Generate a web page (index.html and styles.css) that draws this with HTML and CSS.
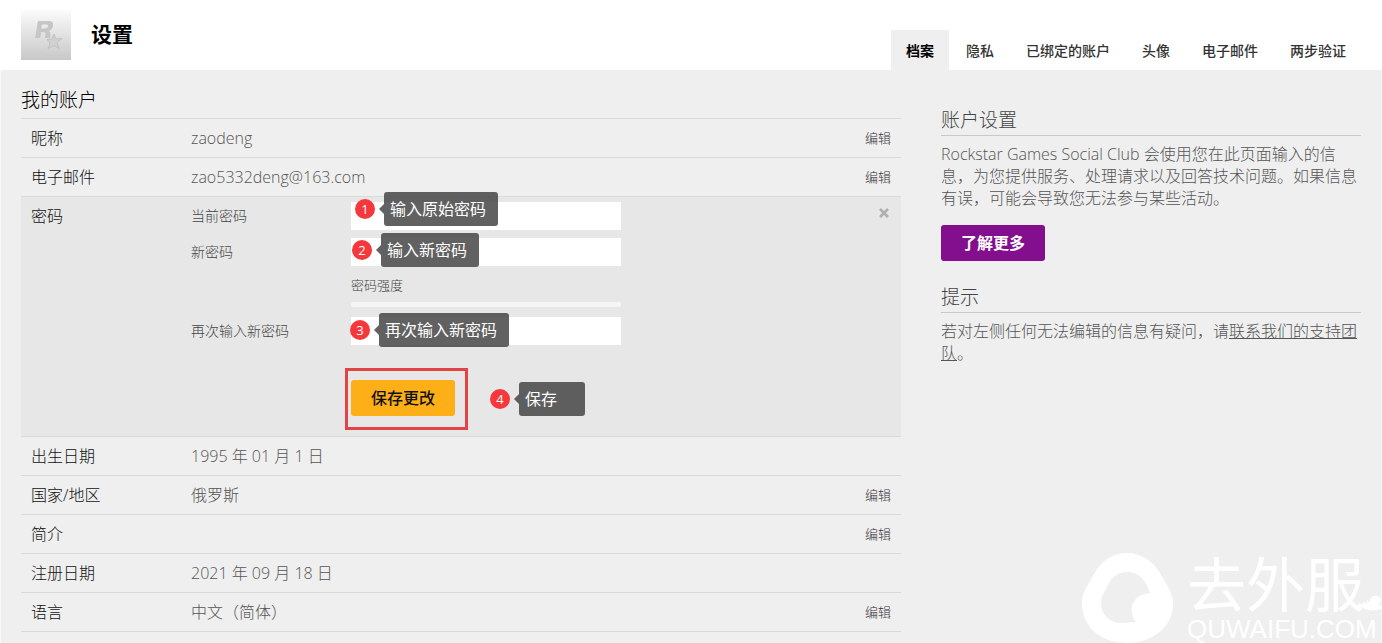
FILE: index.html
```html
<!DOCTYPE html>
<html lang="zh-CN">
<head>
<meta charset="utf-8">
<meta name="viewport" content="width=device-width, initial-scale=1">
<title>设置</title>
<link rel="stylesheet" href="styles.css">
</head>
<body>
<header class="header">
  <svg class="avatar" viewBox="0 0 50 50" aria-hidden="true">
    <defs><linearGradient id="fade" x1="0" y1="0" x2="0" y2="1"><stop offset="0" stop-color="#fbfbfb"/><stop offset="1" stop-color="#c8c8c8"/></linearGradient></defs>
    <rect width="50" height="50" fill="url(#fade)"/>
    <path d="M17 11h11q5 0 4 5-1 4-4 5 2 1 1.500 4l-.5 3h-5l.5-4q0-2-2-2h-2l-1.500 6h-5zM21 14.500l-1 4h4q2.500 0 3-2 .5-2-2-2z" fill="#c6c6c6" fill-rule="evenodd"/>
    <path d="M33 24l1.500 5 6.500-.5-5 4 2 6-5-3-6 3 2-5.500-3-3.500 5-.5z" fill="#d2d2d2" stroke="#c2c2c2"/>
  </svg>
  <h1 class="title">设置</h1>
  <nav class="tabs">
    <a class="tab active" href="#">档案</a>
    <a class="tab" href="#">隐私</a>
    <a class="tab" href="#">已绑定的账户</a>
    <a class="tab" href="#">头像</a>
    <a class="tab" href="#">电子邮件</a>
    <a class="tab" href="#">两步验证</a>
  </nav>
</header>
<div class="content">
  <main class="account">
    <h2 class="heading">我的账户</h2>
    <section class="row"><h3 class="name">昵称</h3><p class="value">zaodeng</p><button class="edit" type="button">编辑</button></section>
    <section class="row"><h3 class="name">电子邮件</h3><p class="value">zao5332deng@163.com</p><button class="edit" type="button">编辑</button></section>
    <section class="row open">
      <h3 class="name">密码</h3>
      <form class="form">
        <label class="label" for="current">当前密码</label>
        <div class="field"><input class="input" id="current" type="password">
          <div class="note note-1"><span class="badge">1</span><span class="tip">输入原始密码</span></div></div>
        <label class="label" for="new">新密码</label>
        <div class="field"><input class="input" id="new" type="password">
          <div class="note note-2"><span class="badge">2</span><span class="tip">输入新密码</span></div></div>
        <div class="strength"><span>密码强度</span><div class="meter"></div></div>
        <label class="label" for="again">再次输入新密码</label>
        <div class="field"><input class="input" id="again" type="password">
          <div class="note note-3"><span class="badge">3</span><span class="tip">再次输入新密码</span></div></div>
        <div class="actions"><button class="button save" type="button">保存更改</button>
          <div class="frame"></div>
          <div class="note note-4"><span class="badge">4</span><span class="tip">保存</span></div></div>
      </form>
      <button class="close" type="button" aria-label="关闭"><svg width="10" height="10" viewBox="0 0 10 10"><path d="M1 1l8 8M9 1L1 9" stroke="#b0b0b0" stroke-width="2.600"/></svg></button>
    </section>
    <section class="row"><h3 class="name">出生日期</h3><p class="value">1995 年 01 月 1 日</p></section>
    <section class="row"><h3 class="name">国家/地区</h3><p class="value">俄罗斯</p><button class="edit" type="button">编辑</button></section>
    <section class="row"><h3 class="name">简介</h3><p class="value"></p><button class="edit" type="button">编辑</button></section>
    <section class="row"><h3 class="name">注册日期</h3><p class="value">2021 年 09 月 18 日</p></section>
    <section class="row"><h3 class="name">语言</h3><p class="value">中文（简体）</p><button class="edit" type="button">编辑</button></section>
  </main>
  <aside class="side">
    <h2 class="side-heading">账户设置</h2>
    <p class="text">Rockstar Games Social Club 会使用您在此页面输入的信息，为您提供服务、处理请求以及回答技术问题。如果信息有误，可能会导致您无法参与某些活动。</p>
    <button class="button more" type="button">了解更多</button>
    <h2 class="side-heading">提示</h2>
    <p class="text">若对左侧任何无法编辑的信息有疑问，请<a class="link" href="#">联系我们的支持团队</a>。</p>
  </aside>
</div>
<div class="watermark">
  <svg class="mark" viewBox="0 0 92 90" aria-hidden="true"><path fill="#fff" fill-rule="evenodd" d="M46 0C60 0 72 8 79 20C87 34 92 41 92 51C92 74 71 90 47 90C21 90 1 75 1 50C1 40 7 32 13 21C20 8 31 0 46 0ZM46 19C37 19 31 24 27 32C23 40 20 43 20 50C20 62 29 70 41 70L55 69C47 59 49 42 69 40C64 25 57 19 46 19Z"/></svg>
  <div class="words"><span class="brand">去外服</span><span class="domain">QUWAIFU.COM</span></div>
  <svg class="snail" viewBox="0 0 28 18" aria-hidden="true"><path fill="#fff" d="M6 8l3 2 0-4 3 3 1-4 3 3c-1-5 3-8 7-7 5 1 5 6 1 9l4 1-1 3c-6 2-14 2-18-1l-9-1z"/></svg>
</div>
</body>
</html>
```
FILE: styles.css
```css
* { box-sizing: border-box; }
body {
  display: flex;
  flex-direction: column;
  margin: 0;
  min-height: 100vh;
  background: #efefef;
  color: #555;
  font: 300 16px/22px "Open Sans", "Noto Sans CJK SC", sans-serif;
}
h1, h2, h3, p { margin: 0; font-weight: inherit; }
button { padding: 0; border: 0; background: none; font-family: inherit; cursor: pointer; }
.header { display: flex; height: 70px; padding: 0 21px; background: #fff; }
.avatar { width: 50px; height: 50px; margin: 10px 20px 0 0; }
.title { color: #000; font-size: 21px; line-height: 68px; font-weight: 700; }
.tabs { display: flex; gap: 2px; margin-left: auto; padding-top: 30px; }
.tab { padding: 0 15px; color: #333; font-size: 14px; line-height: 42px; font-weight: 500; text-decoration: none; }
.tab.active { background: #efefef; color: #000; font-weight: 700; }
.content { flex: 1; display: flex; gap: 40px; padding: 0 20px; border: solid #f8f8f8; border-width: 0 1px; }
.account { flex: 1; min-width: 0; padding-top: 18px; }
.heading { height: 31px; border-bottom: 1px solid #dadada; color: #000; font-size: 19px; line-height: 24px; }
.row { display: flex; min-height: 39px; padding: 0 10px; border-bottom: 1px solid #dadada; line-height: 38px; }
.name { width: 160px; color: #111; font-size: 16px; }
.value { flex: 1; }
.edit { color: #333; font-size: 13px; line-height: 38px; font-weight: 300; }
.row.open { background: #e7e7e7; }
.form { flex: 1; display: grid; grid-template-columns: 160px 270px; align-content: start; row-gap: 8px; padding: 5px 0 20px; line-height: 28px; }
.label { color: #444; font-size: 14px; }
.field { position: relative; height: 28px; }
.input { display: block; width: 100%; height: 28px; padding: 0 8px; border: 0; background: #fff; }
.strength { grid-column: 2; height: 35px; color: #444; font-size: 13px; line-height: 22px; }
.strength span { display: block; }
.meter { height: 5px; margin-top: 6px; border-radius: 3px; background: #f5f5f5; }
.actions { grid-column: 2; position: relative; margin-top: 27px; height: 36px; }
.button { width: 104px; height: 36px; border-radius: 3px; font-size: 16px; line-height: 36px; }
.save { background: #fcaf17; color: #111; font-weight: 500; }
.frame { position: absolute; left: -6px; top: -12px; width: 123px; height: 62px; border: 3px solid #e14444; pointer-events: none; }
.close { align-self: flex-start; height: 32px; line-height: 10px; padding-right: 2px; }
.note { position: absolute; display: flex; align-items: center; gap: 9px; white-space: nowrap; }
.note-1 { left: 4px; top: -10px; }
.note-2 { left: 1px; top: -5px; }
.note-3 { left: -1px; top: -4px; }
.note-4 { left: 139px; top: 2px; }
.badge { width: 20px; height: 20px; border-radius: 50%; background: #f5383b; color: #fff; font-size: 13px; font-weight: 400; line-height: 20px; text-align: center; }
.tip { position: relative; min-width: 66px; height: 34px; padding: 0 12px 0 6px; border-radius: 3px; background: rgba(75, 75, 75, .88); color: #fff; font-weight: 400; line-height: 34px; }
.tip::before { content: ""; position: absolute; left: -5px; top: 12px; border: 5px solid transparent; border-left: 0; border-right-color: rgba(75, 75, 75, .88); }
.side { width: 420px; padding-top: 38px; }
.side-heading { height: 28px; margin-bottom: 7px; border-bottom: 1px solid #c9c9c9; color: #444; font-size: 19px; line-height: 24px; }
.more { display: block; margin: 16px 0 24px; background: #830f8f; color: #fff; font-weight: 700; }
.link { color: inherit; text-decoration: underline; }
.watermark { position: absolute; right: 0; bottom: 0; display: flex; width: 301px; color: #fff; }
.mark { flex: none; width: 92px; height: 90px; }
.words { display: flex; flex-direction: column; margin-left: 14px; }
.brand { font-size: 59px; line-height: 62px; font-weight: 400; white-space: nowrap; }
.domain { font: 400 26px/28px "Liberation Sans", sans-serif; }
.snail { position: absolute; right: 0; top: 42px; width: 28px; height: 18px; }
```
